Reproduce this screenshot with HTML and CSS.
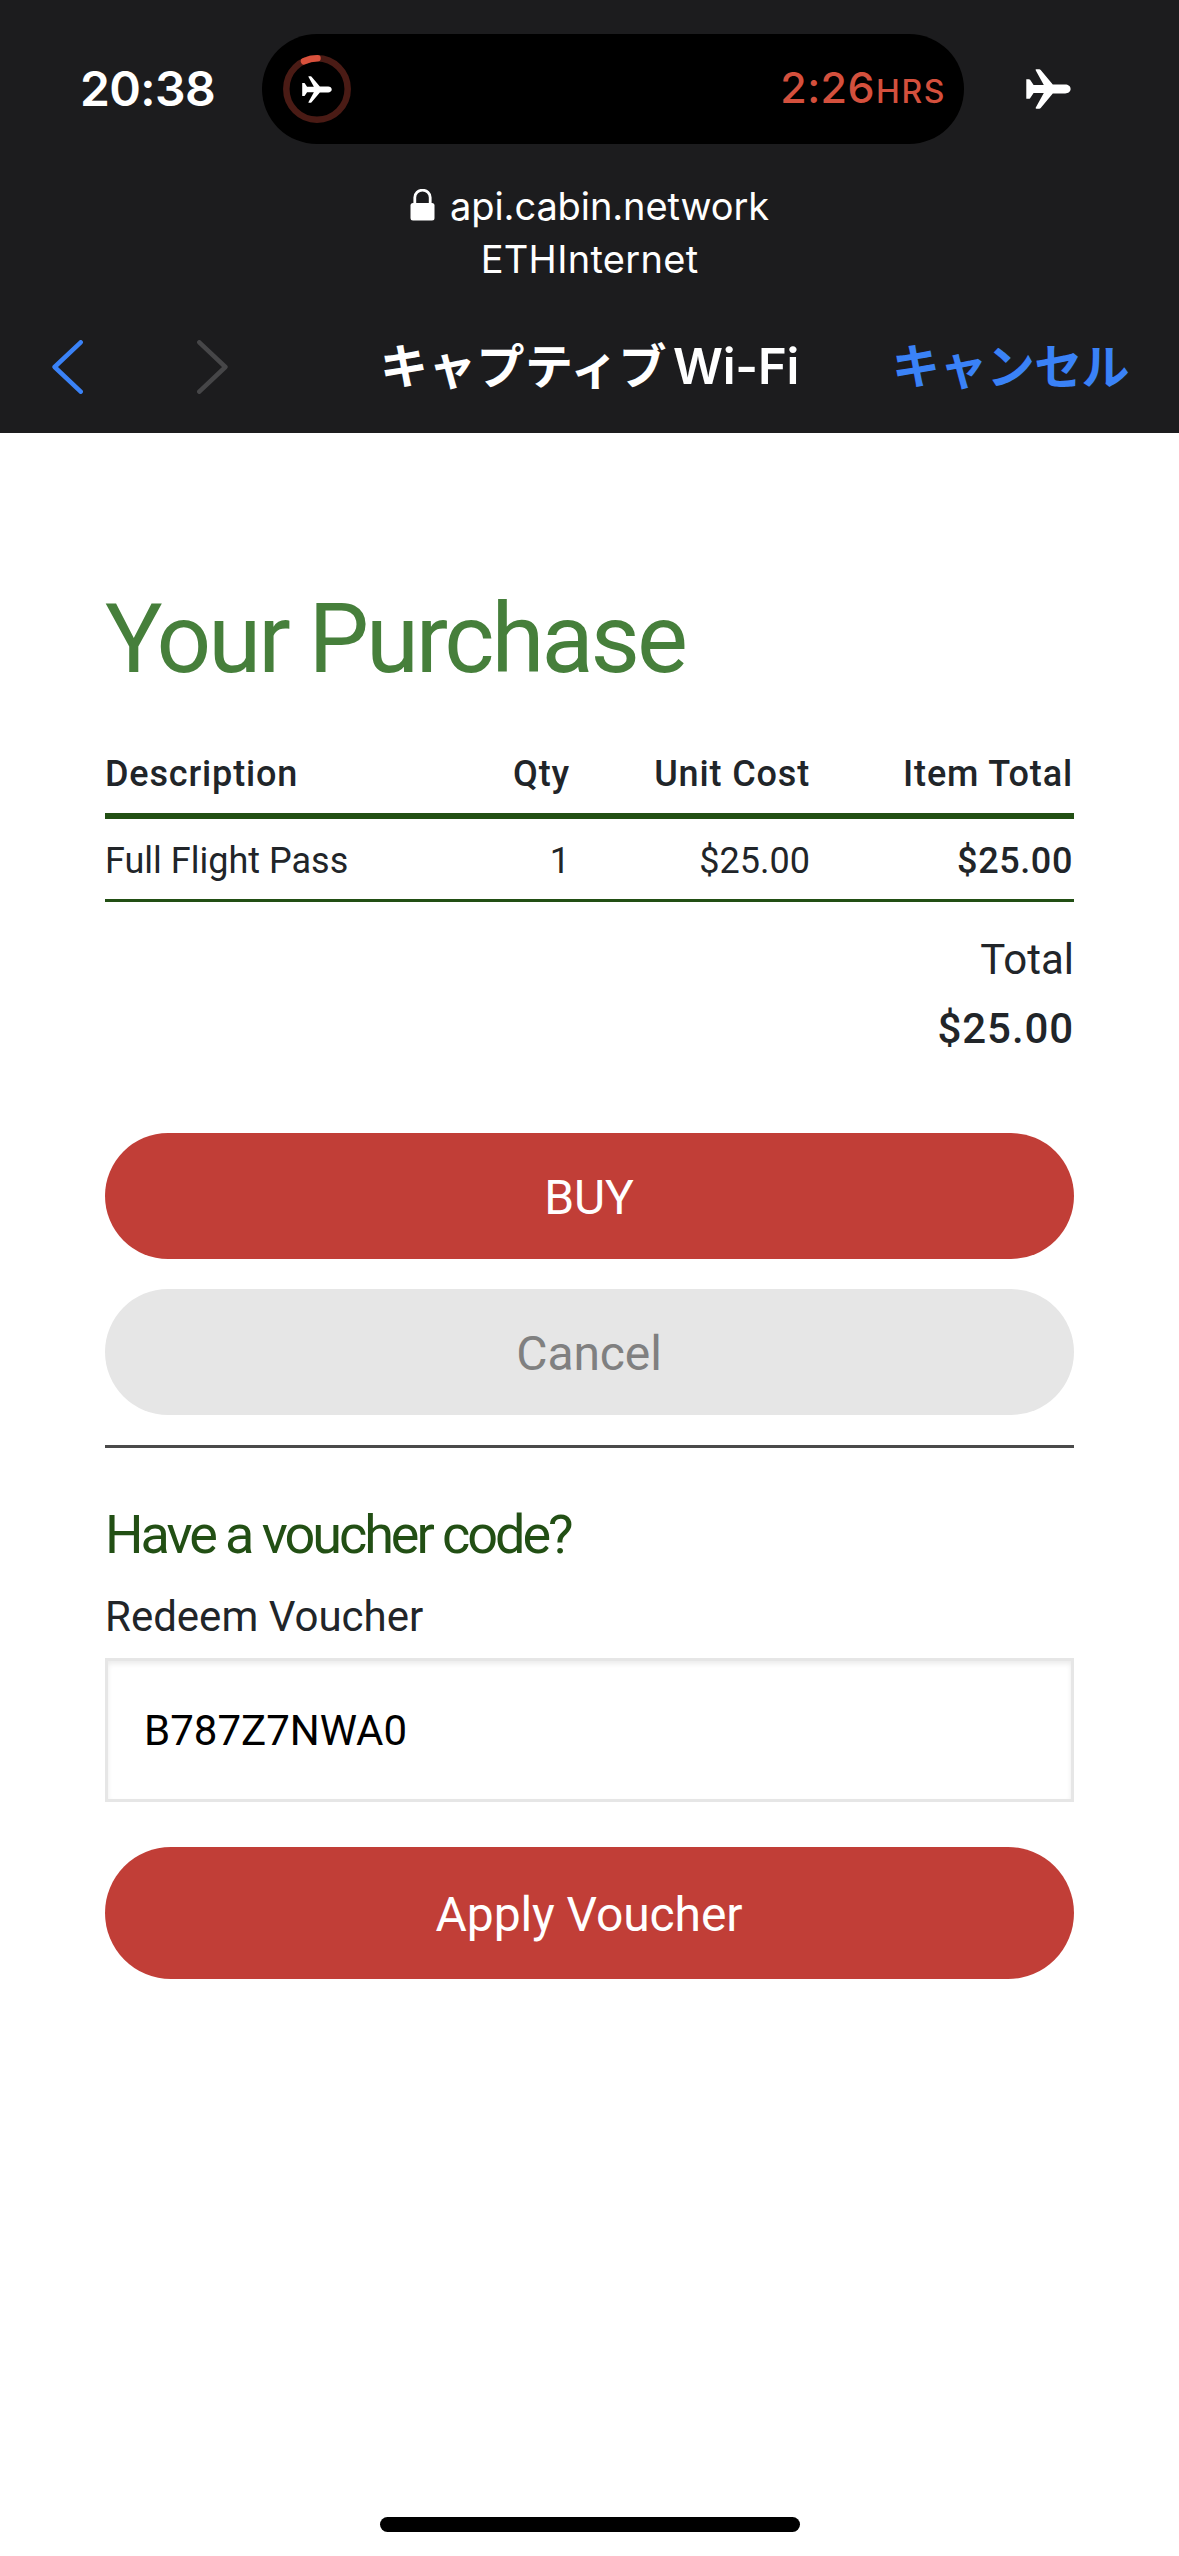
FILE: index.html
```html
<!DOCTYPE html>
<html lang="ja">
<head>
<meta charset="utf-8">
<title>キャプティブWi-Fi</title>
<link rel="stylesheet" href="styles.css">
</head>
<body>
<svg class="defs" aria-hidden="true">
  <symbol id="plane" viewBox="0 0 45 40">
    <path d="M0.3 10.2h2.6c.5 0 .9.2 1.2.6L7.6 15.9l10.2.1L9.8 1.4C9.400.6 9.7.3 10.300.3h2.900c.6 0 1.1.3 1.500.8L26.800 15.500l12.400.1c3 0 5.400 1.800 5.400 4.400s-2.400 4.400-5.400 4.400l-12.400.1L14.700 38.900c-.4.5-.9.8-1.500.8h-2.900c-.6 0-.9-.3-.5-1.100l8-14.600-10.200.1-3.500 5.100c-.3.4-.7.6-1.200.6H.3z"/>
  </symbol>
</svg>
<header class="chrome">
  <div class="status">
    <div class="clock">20:38</div>
    <div class="island">
      <div class="progress">
        <svg class="ring" viewBox="0 0 68 68" fill="none" stroke-width="6.5">
          <circle cx="34" cy="34" r="30.700" stroke="#4a1b15"/>
          <path d="M21 6.300A30.700 30.700 0 0 1 34.500 3.300" stroke="#d9513c" stroke-linecap="round"/>
        </svg>
        <svg class="plane-small"><use href="#plane"/></svg>
      </div>
      <div class="remaining">2:26<span class="unit">HRS</span></div>
    </div>
    <svg class="plane"><use href="#plane"/></svg>
  </div>
  <div class="address">
    <div class="host">
      <svg class="lock" viewBox="0 0 24 32"><path d="M4.300 15V8.500a7.700 7.300 0 0 1 15.400 0V15" fill="none" stroke="#fff" stroke-width="2.800"/><rect y="14" width="24" height="17.500" rx="2.500" fill="#fff"/></svg>
      <span>api.cabin.network</span>
    </div>
    <div class="ssid">ETHInternet</div>
  </div>
  <nav class="nav">
    <div class="arrows">
      <svg class="arrow back" viewBox="0 0 31 54"><path d="M28.700 2.300L2.600 27l26.100 24.700"/></svg>
      <svg class="arrow forward" viewBox="0 0 31 54"><path d="M2.300 2.300L28.400 27 2.300 51.700"/></svg>
    </div>
    <div class="title"><span class="kana">キャプティブ</span>Wi-Fi</div>
    <a class="close">キャンセル</a>
  </nav>
</header>
<main class="page">
  <h1 class="heading">Your Purchase</h1>
  <table class="items">
    <colgroup><col class="c-desc"><col class="c-qty"><col class="c-unit"><col class="c-total"></colgroup>
    <thead><tr><th class="desc">Description</th><th>Qty</th><th>Unit Cost</th><th class="last">Item Total</th></tr></thead>
    <tbody><tr><td class="desc">Full Flight Pass</td><td>1</td><td>$25.00</td><td class="strong">$25.00</td></tr></tbody>
  </table>
  <div class="sum">
    <div>Total</div>
    <div class="amount">$25.00</div>
  </div>
  <div class="actions">
    <button class="btn">BUY</button>
    <button class="btn muted">Cancel</button>
  </div>
  <hr class="rule">
  <h2 class="subheading">Have a voucher code?</h2>
  <label class="label" for="voucher">Redeem Voucher</label>
  <input class="field" id="voucher" type="text" value="B787Z7NWA0">
  <button class="btn apply">Apply Voucher</button>
</main>
<footer class="home"><div class="home-bar"></div></footer>
</body>
</html>
```
FILE: styles.css
```css
* { box-sizing: border-box; }

body {
  margin: 0;
  width: 1179px;
  height: 2556px;
  display: flex;
  flex-direction: column;
  background: #fff;
  color: #212529;
  font-family: Roboto, sans-serif;
}

.defs { display: none; }

/* Browser chrome */
.chrome {
  height: 433px;
  background: #1c1c1e;
  color: #fff;
  font-family: Inter, "Noto Sans CJK JP", sans-serif;
}

.status {
  display: grid;
  grid-template-columns: 262px 702px 1fr;
  align-items: center;
  padding-top: 34px;
  height: 144px;
}

.clock {
  padding-left: 80px;
  font-size: 48px;
  font-weight: 600;
  line-height: 56px;
  letter-spacing: -0.6px;
}

.island {
  display: flex;
  align-items: center;
  justify-content: space-between;
  height: 110px;
  padding: 0 18px 0 21px;
  border-radius: 55px;
  background: #000;
}

.progress { display: grid; place-items: center; width: 68px; height: 68px; }
.progress > svg { grid-area: 1 / 1; }
.ring { width: 68px; height: 68px; }
.plane-small { width: 30px; height: 27px; fill: #fff; }

.remaining {
  color: #d4503d;
  font-size: 43px;
  font-weight: 500;
  line-height: 56px;
  letter-spacing: 0.4px;
}
.unit { margin-left: 1px; font-size: 32px; letter-spacing: 1.6px; }

.plane { width: 45px; height: 40px; margin-left: 62px; fill: #fff; }

.address {
  margin-top: 36px;
  font-size: 38px;
  line-height: 53px;
  text-align: center;
}
.host { display: flex; align-items: center; justify-content: center; gap: 15px; letter-spacing: -0.1px; }
.lock { width: 25px; height: 32px; margin-top: -3px; }
.ssid { letter-spacing: 0.3px; }

.nav {
  display: grid;
  grid-template-columns: 380px 1fr 288px;
  align-items: center;
  margin-top: 15px;
  height: 132px;
}
.arrows { display: flex; gap: 114px; padding-left: 52px; }
.arrow { width: 31px; height: 54px; fill: none; stroke-width: 4.500; stroke-linecap: round; stroke-linejoin: round; }
.back { stroke: #3a82f7; }
.forward { stroke: #464648; }
.title, .close { font-weight: 600; line-height: 70px; white-space: nowrap; }
.title { font-size: 49px; letter-spacing: -0.2px; }
.kana { margin-right: 6px; font-size: 48px; letter-spacing: 0.3px; }
.close { padding-left: 1px; color: #3a82f7; font-size: 48px; letter-spacing: -0.6px; }

/* Purchase page */
.page { flex: 1; padding: 148px 105px 0; }

.heading {
  margin: 0;
  color: #467f3b;
  font-size: 96px;
  font-weight: 400;
  line-height: 116px;
  letter-spacing: -3.05px;
}

.items {
  width: 969px;
  margin-top: 38px;
  border-collapse: separate;
  border-spacing: 0;
  table-layout: fixed;
  font-size: 36px;
  line-height: 54px;
}
.c-desc { width: 300px; }
.c-qty { width: 165px; }
.c-unit { width: 240px; }
.c-total { width: 264px; }
.items th {
  padding: 12px 0;
  border-bottom: 6px solid #224f14;
  font-weight: 500;
  letter-spacing: 0.85px;
  text-align: right;
}
.items td {
  padding: 15px 0 11px;
  border-bottom: 3px solid #224f14;
  text-align: right;
}
.items .desc { text-align: left; }
.items .last { padding-right: 1px; }
.items .strong { padding-right: 1px; font-weight: 500; letter-spacing: 0.6px; }

.sum {
  margin-top: 23px;
  font-size: 42px;
  line-height: 69px;
  text-align: right;
}
.amount { font-weight: 500; letter-spacing: 0.9px; }

.actions { display: flex; flex-direction: column; gap: 30px; margin-top: 70px; }

.btn {
  display: block;
  width: 100%;
  height: 126px;
  padding: 3px 1px 0 0;
  border: 0;
  border-radius: 66px;
  background: #c13e37;
  color: #fff;
  font: 400 48px/56px Roboto, sans-serif;
  letter-spacing: -0.1px;
}
.muted { background: #e6e6e6; color: #808080; }

.rule { margin: 30px 0 0; border: 0; height: 3px; background: #4a4a4a; }

.subheading {
  margin: 54px 0 0;
  color: #224f14;
  font-size: 54px;
  font-weight: 400;
  line-height: 65px;
  letter-spacing: -3.05px;
}

.label { display: block; margin-top: 18px; font-size: 42px; line-height: 63px; }

.field {
  display: block;
  width: 100%;
  height: 144px;
  margin-top: 10px;
  padding: 0 36px;
  border: 3px solid #e6e6e6;
  border-radius: 0;
  background: #fff;
  box-shadow: inset 0 3px 5px rgba(0, 0, 0, 0.08);
  color: #000;
  font: 400 42px/60px Roboto, sans-serif;
}

.apply { height: 132px; margin-top: 45px; }

.home { display: flex; justify-content: center; padding-bottom: 24px; }
.home-bar { width: 420px; height: 15px; border-radius: 8px; background: #000; }
```
